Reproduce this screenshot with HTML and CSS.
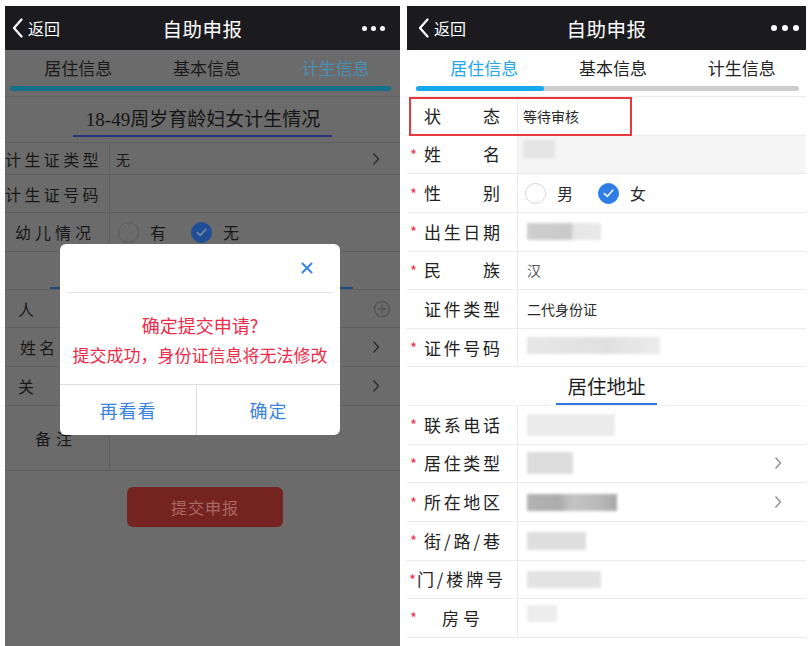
FILE: index.html
```html
<!DOCTYPE html>
<html lang="zh-CN">
<head>
<meta charset="utf-8">
<title>自助申报</title>
<link rel="stylesheet" href="styles.css">
</head>
<body>
<div class="screens">

  <section class="phone phone-l">
    <header class="hdr">
      <div class="back"><svg class="chev" viewBox="0 0 11 20"><polyline points="9.5,1.5 2,10 9.5,18.5"/></svg><span>返回</span></div>
      <div class="title">自助申报</div>
      <div class="dots dots-l"><i></i><i></i><i></i></div>
    </header>
    <nav class="tabs tabs-l">
      <div class="tab-row"><span class="tab">居住信息</span><span class="tab">基本信息</span><span class="tab on">计生信息</span></div>
      <div class="bar"><div class="fill fill-full"></div></div>
    </nav>
    <div class="ftitle"><span>18-49周岁育龄妇女计生情况</span></div>

    <div class="lrow h32">
      <div class="ll ll-5">计生证类型</div>
      <div class="lv">无<svg class="arrow arrow-l" viewBox="0 0 8 14"><polyline points="1.5,1.5 6.5,7 1.5,12.5"/></svg></div>
    </div>
    <div class="lrow h38">
      <div class="ll ll-5">计生证号码</div>
      <div class="lv"></div>
    </div>
    <div class="lrow h39">
      <div class="ll ll-4">幼儿情况</div>
      <div class="lv radios-l">
        <span class="radio radio-l"></span><span class="rtxt">有</span>
        <span class="radio radio-l on"><svg viewBox="0 0 20 20"><polyline points="5.5,10.5 8.8,13.5 14.5,7"/></svg></span><span class="rtxt">无</span>
      </div>
    </div>
    <div class="lrow h38 lsec"><span class="lsec-line"></span></div>
    <div class="lrow h38">
      <div class="ll ll-1 noline">人</div>
      <div class="lv lv-plain"><svg class="plus" viewBox="0 0 18 18"><circle cx="9" cy="9" r="7.5"/><line x1="9" y1="4.5" x2="9" y2="13.5"/><line x1="4.5" y1="9" x2="13.5" y2="9"/></svg></div>
    </div>
    <div class="lrow h39">
      <div class="ll ll-2">姓名</div>
      <div class="lv"><svg class="arrow arrow-l" viewBox="0 0 8 14"><polyline points="1.5,1.5 6.5,7 1.5,12.5"/></svg></div>
    </div>
    <div class="lrow h39">
      <div class="ll ll-1">关</div>
      <div class="lv"><svg class="arrow arrow-l" viewBox="0 0 8 14"><polyline points="1.5,1.5 6.5,7 1.5,12.5"/></svg></div>
    </div>
    <div class="lrow h65">
      <div class="ll ll-note">备注</div>
      <div class="lv"></div>
    </div>
    <div class="btn-wrap"><button class="submit">提交申报</button></div>

    <div class="modal">
      <div class="m-top"><svg class="close" viewBox="0 0 12 12"><line x1="1.5" y1="1.5" x2="10.5" y2="10.5"/><line x1="10.5" y1="1.5" x2="1.5" y2="10.5"/></svg></div>
      <div class="m-sep"></div>
      <div class="m-body">
        <div class="m-title">确定提交申请?</div>
        <div class="m-sub">提交成功，身份证信息将无法修改</div>
      </div>
      <div class="m-foot">
        <div class="m-btn m-btn-a">再看看</div>
        <div class="m-btn">确定</div>
      </div>
    </div>
  </section>

  <section class="phone phone-r">
    <header class="hdr">
      <div class="back back-r"><svg class="chev" viewBox="0 0 11 20"><polyline points="9.5,1.5 2,10 9.5,18.5"/></svg><span>返回</span></div>
      <div class="title">自助申报</div>
      <div class="dots"><i></i><i></i><i></i></div>
    </header>
    <nav class="tabs tabs-r">
      <div class="tab-row"><span class="tab on">居住信息</span><span class="tab">基本信息</span><span class="tab">计生信息</span></div>
      <div class="bar"><div class="fill fill-third"></div></div>
    </nav>

    <div class="rrow">
      <div class="lab"><span class="star"></span><span class="ltxt">状态</span></div>
      <div class="val val-status">等待审核</div>
      <span class="mark"></span>
    </div>
    <div class="rrow">
      <div class="lab"><span class="star">*</span><span class="ltxt">姓名</span></div>
      <div class="val val-disabled"><span class="blur b-name"></span></div>
    </div>
    <div class="rrow">
      <div class="lab"><span class="star">*</span><span class="ltxt">性别</span></div>
      <div class="val radios-r">
        <span class="radio"></span><span class="rtxt">男</span>
        <span class="radio on"><svg viewBox="0 0 20 20"><polyline points="5.5,10.5 8.8,13.5 14.5,7"/></svg></span><span class="rtxt">女</span>
      </div>
    </div>
    <div class="rrow">
      <div class="lab"><span class="star">*</span><span class="ltxt">出生日期</span></div>
      <div class="val"><span class="blur b-date"></span></div>
    </div>
    <div class="rrow">
      <div class="lab"><span class="star">*</span><span class="ltxt">民族</span></div>
      <div class="val val-soft">汉</div>
    </div>
    <div class="rrow">
      <div class="lab"><span class="star"></span><span class="ltxt">证件类型</span></div>
      <div class="val">二代身份证</div>
    </div>
    <div class="rrow">
      <div class="lab"><span class="star">*</span><span class="ltxt">证件号码</span></div>
      <div class="val"><span class="blur b-id"></span></div>
    </div>
    <div class="rrow rsec"><span class="rsec-t">居住地址</span></div>
    <div class="rrow">
      <div class="lab"><span class="star">*</span><span class="ltxt">联系电话</span></div>
      <div class="val"><span class="blur b-tel"></span></div>
    </div>
    <div class="rrow">
      <div class="lab"><span class="star">*</span><span class="ltxt">居住类型</span></div>
      <div class="val"><span class="blur b-type"></span><svg class="arrow" viewBox="0 0 8 14"><polyline points="1.5,1.5 6.5,7 1.5,12.5"/></svg></div>
    </div>
    <div class="rrow">
      <div class="lab"><span class="star">*</span><span class="ltxt">所在地区</span></div>
      <div class="val"><span class="blur b-area"></span><svg class="arrow" viewBox="0 0 8 14"><polyline points="1.5,1.5 6.5,7 1.5,12.5"/></svg></div>
    </div>
    <div class="rrow">
      <div class="lab"><span class="star">*</span><span class="ltxt">街/路/巷</span></div>
      <div class="val"><span class="blur b-street"></span></div>
    </div>
    <div class="rrow">
      <div class="lab lab-tight"><span class="star star-tight">*</span><span class="ltxt ltxt-wide">门/楼牌号</span></div>
      <div class="val"><span class="blur b-door"></span></div>
    </div>
    <div class="rrow">
      <div class="lab"><span class="star">*</span><span class="ltxt ltxt-room">房号</span></div>
      <div class="val"><span class="blur b-room"></span></div>
    </div>
  </section>

</div>
</body>
</html>
```

FILE: styles.css
```css
html, body {
  margin: 0;
  padding: 0;
  background: #fff;
  font-family: "Noto Sans CJK SC", "Noto Sans", sans-serif;
}

.screens {
  display: flex;
  gap: 7px;
  padding: 6px 0 0 5px;
  height: 646px;
  box-sizing: border-box;
  overflow: hidden;
}

.phone {
  position: relative;
  display: flex;
  flex-direction: column;
  height: 640px;
  overflow: hidden;
}

.phone-l {
  width: 395px;
  background: #6b6b6b;
}

.phone-r {
  width: 399px;
  background: #fff;
}

/* header */
.hdr {
  flex: none;
  height: 44px;
  background: #1b1b1f;
  color: #fff;
  display: grid;
  grid-template-columns: 1fr auto 1fr;
  align-items: center;
  padding: 0 7px 0 7px;
}

.back {
  display: flex;
  align-items: center;
  gap: 5px;
  font-size: 16px;
  line-height: 20px;
}

.back-r {
  padding-left: 4px;
}

.chev {
  width: 11px;
  height: 20px;
  fill: none;
  stroke: #fff;
  stroke-width: 2.2;
  stroke-linecap: round;
  stroke-linejoin: round;
}

.title {
  font-size: 19.5px;
  letter-spacing: 0.5px;
}

.dots {
  justify-self: end;
  display: flex;
  gap: 5px;
  padding-right: 0;
}

.dots i {
  display: block;
  width: 6px;
  height: 6px;
  border-radius: 50%;
  background: #fff;
}

.dots-l {
  gap: 4px;
  padding-right: 8px;
}

.dots-l i {
  width: 5px;
  height: 5px;
}

/* tabs */
.tabs {
  flex: none;
  height: 47px;
  padding-top: 4px;
  box-sizing: border-box;
}

.tabs-r {
  border-bottom: 1px solid #ececec;
}

.tabs-l {
  border-bottom: 1px solid #616161;
}

.tab-row {
  display: flex;
  height: 28px;
  padding: 0 0 0 13px;
}

.tabs-l .tab-row {
  padding: 0 0 0 9px;
}

.tab {
  flex: 1;
  text-align: center;
  font-size: 17px;
  line-height: 28px;
  color: #222;
}

.tabs-r .tab.on {
  color: #24a6ec;
}

.tabs-l .tab {
  color: #1a1a1a;
}

.tabs-l .tab.on {
  color: #4690b6;
}

.bar {
  margin: 4px 7px 0 9px;
  height: 5px;
  border-radius: 3px;
  background: #cdcdcd;
}

.tabs-l .bar {
  margin: 4px 9px 0 5px;
  background: #5d5d5d;
}

.fill {
  height: 100%;
  border-radius: 3px;
  background: #17a9ef;
}

.fill-third {
  width: 33.3%;
}

.fill-full {
  width: 100%;
  background: #16708b;
}

/* left (dimmed) form */
.ftitle {
  flex: none;
  height: 46px;
  box-sizing: border-box;
  border-bottom: 1px solid #5f5f5f;
  text-align: center;
}

.ftitle span {
  display: inline-block;
  margin-top: 8px;
  padding: 0 12px 0 13px;
  font-family: "Liberation Serif", "Noto Sans CJK SC", serif;
  font-size: 19px;
  line-height: 30px;
  color: #151515;
  border-bottom: 2px solid #27367c;
}

.lrow {
  flex: none;
  display: flex;
  box-sizing: border-box;
  border-bottom: 1px solid #5f5f5f;
  color: #181818;
}

.h32 { height: 32px; }
.h38 { height: 38px; }
.h39 { height: 39px; }
.h65 { height: 65px; }

.ll {
  width: 105px;
  flex: none;
  box-sizing: border-box;
  border-right: 1px solid #5d5d5d;
  display: flex;
  align-items: center;
  font-size: 16px;
  white-space: nowrap;
}

.ll.noline {
  border-right-color: transparent;
}

.ll-5 { letter-spacing: 3.4px; padding-left: 0; }
.ll-4 { letter-spacing: 4px; padding-left: 10px; }
.ll-2 { letter-spacing: 3px; padding-left: 15px; }
.ll-1 { padding-left: 13px; }
.ll-note { letter-spacing: 5px; padding-left: 30px; align-items: flex-start; padding-top: 20px; }

.lv {
  flex: 1;
  display: flex;
  align-items: center;
  padding-left: 6px;
  padding-right: 20px;
  font-size: 14px;
  color: #181818;
}

.lv-plain {
  justify-content: flex-end;
  padding-right: 9px;
}

.arrow {
  width: 8px;
  height: 14px;
  margin-left: auto;
  fill: none;
  stroke: #8a8a8a;
  stroke-width: 1.3;
}

.arrow-l {
  stroke: #2a2a2a;
}

.plus {
  width: 18px;
  height: 18px;
  fill: none;
  stroke: #4e4e4e;
  stroke-width: 1.1;
}

.lsec {
  position: relative;
}

.lsec-line {
  position: absolute;
  left: 45px;
  right: 47px;
  bottom: 0;
  height: 2px;
  background: #1d4b8a;
}

.radios-l {
  padding-left: 8px;
}

.radio {
  width: 21px;
  height: 21px;
  border-radius: 50%;
  border: 1px solid #d6d6d6;
  box-sizing: border-box;
  display: flex;
  align-items: center;
  justify-content: center;
  flex: none;
}

.radio svg {
  width: 20px;
  height: 20px;
  fill: none;
  stroke: #fff;
  stroke-width: 1.6;
  stroke-linecap: round;
  stroke-linejoin: round;
}

.radio.on {
  background: #2e7ee6;
  border-color: #2e7ee6;
}

.radio-l {
  border-color: #5b5b5b;
}

.radio-l.on {
  background: #1f4e96;
  border-color: #1f4e96;
}

.radio-l svg {
  stroke: #7d8aa0;
}

.rtxt {
  font-size: 16px;
  margin: 0 25px 0 11px;
}

.btn-wrap {
  flex: none;
  display: flex;
  justify-content: center;
  padding: 16px 0 0 5px;
}

.submit {
  -webkit-appearance: none;
  appearance: none;
  width: 156px;
  height: 40px;
  border: none;
  border-radius: 6px;
  background-color: #742320;
  color: #a86a66;
  font-family: "Noto Sans CJK SC", sans-serif;
  font-size: 16px;
  letter-spacing: 1px;
}

/* modal */
.modal {
  position: absolute;
  left: 55px;
  top: 238px;
  width: 280px;
  height: 191px;
  background: #fff;
  border-radius: 6px;
  display: flex;
  flex-direction: column;
}

.m-top {
  height: 48px;
  display: flex;
  justify-content: flex-end;
  align-items: center;
  padding-right: 27px;
}

.close {
  width: 12px;
  height: 12px;
  stroke: #3e84e2;
  stroke-width: 2;
  stroke-linecap: round;
}

.m-sep {
  height: 1px;
  margin: 0 8px;
  background: #e3e3e3;
}

.m-body {
  height: 91px;
  text-align: center;
  color: #ee2a48;
}

.m-title {
  margin-top: 20px;
  font-size: 18px;
  line-height: 24px;
}

.m-sub {
  margin-top: 6px;
  font-size: 17px;
  line-height: 24px;
  white-space: nowrap;
}

.m-foot {
  flex: 1;
  display: flex;
  border-top: 1px solid #dedede;
}

.m-btn {
  flex: 1;
  display: flex;
  align-items: center;
  justify-content: center;
  font-size: 18px;
  color: #3a82e0;
  letter-spacing: 1px;
}

.m-btn-a {
  flex: none;
  width: 136px;
  border-right: 1px solid #dedede;
}

/* right form */
.rrow {
  flex: none;
  position: relative;
  display: flex;
  height: 38.64px;
  box-sizing: border-box;
  border-bottom: 1px solid #ebebeb;
}

.lab {
  width: 111px;
  flex: none;
  box-sizing: border-box;
  border-right: 1px solid #ececec;
  display: flex;
  align-items: center;
  padding-left: 3px;
}

.star {
  width: 14px;
  flex: none;
  color: #f2314e;
  font-size: 15px;
  line-height: 15px;
}

.ltxt {
  display: block;
  width: 76px;
  font-size: 17px;
  line-height: 22px;
  color: #222;
  text-align: justify;
  text-align-last: justify;
  white-space: nowrap;
}

.lab-tight {
  padding-left: 2px;
}

.star-tight {
  width: 8px;
}

.ltxt-wide {
  width: 86px;
}

.ltxt-room {
  text-align: left;
  text-align-last: left;
  letter-spacing: 4px;
  padding-left: 18px;
  box-sizing: border-box;
}

.val {
  flex: 1;
  display: flex;
  align-items: center;
  padding: 0 24px 0 9px;
  font-size: 14px;
  color: #2a2a2a;
}

.val-status {
  padding-left: 5px;
}

.val-disabled {
  background: #f5f5f5;
  padding-left: 5px;
}

.val-soft {
  color: #555;
}

.mark {
  position: absolute;
  left: 2px;
  top: 0;
  width: 223px;
  height: 39px;
  box-sizing: border-box;
  border: 2px solid #e8383c;
}

.radios-r {
  padding-left: 7px;
}

.rsec {
  justify-content: center;
  align-items: flex-end;
  border-bottom-color: #f0f0f0;
}

.rsec-t {
  display: block;
  padding: 0 11px;
  font-size: 19.5px;
  line-height: 34px;
  color: #1e1e1e;
  border-bottom: 2px solid #2f78e0;
}

/* blurred (privacy-masked) values */
.blur {
  display: block;
  height: 17px;
  filter: blur(1.6px);
  background: #e2e2e2;
}

.b-name { width: 32px; height: 18px; background: #e4e4e4; margin-top: -10px; }
.b-date { width: 74px; background: linear-gradient(90deg, #cfcfcf 0%, #c9c9c9 60%, #e6e6e6 62%, #e8e8e8 100%); }
.b-id { width: 133px; background: linear-gradient(90deg, #e6e6e6 0%, #e0e0e0 60%, #ececec 100%); margin-top: -4px; }
.b-tel { width: 88px; height: 22px; background: #ececec; }
.b-type { width: 46px; height: 22px; background: #dcdcdc; }
.b-area { width: 90px; background: linear-gradient(90deg, #b3b3b3 0%, #ababab 35%, #c4c4c4 50%, #b8b8b8 80%, #a8a8a8 100%); }
.b-street { width: 59px; height: 18px; background: #dedede; }
.b-door { width: 74px; background: #e3e3e3; }
.b-room { width: 30px; background: #ededed; margin-top: -8px; }
```
